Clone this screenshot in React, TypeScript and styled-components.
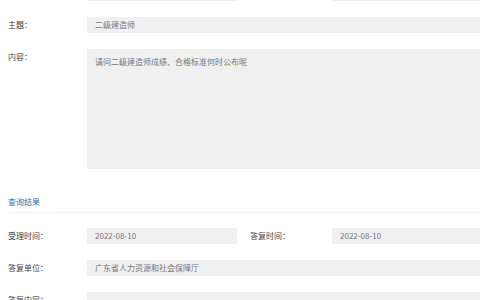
import React from "react";
import styled, { createGlobalStyle } from "styled-components";

const GlobalStyle = createGlobalStyle`
  html, body {
    margin: 0;
    padding: 0;
    background: #fff;
    overflow: hidden;
  }
  body {
    font-family: "Noto Sans CJK SC", "Noto Sans", sans-serif;
  }
`;

// the page is scrolled a little: the row above 主題 only shows its bottom edge
const Page = styled.div`
  width: 600px;
  margin-top: -15px;
  padding-left: 8px;
`;

const Row = styled.div`
  display: flex;
  align-items: flex-start;
  margin-bottom: 16px;
`;

const Label = styled.div<{ $w?: number; $ml?: number }>`
  width: ${(p) => p.$w ?? 79}px;
  margin-left: ${(p) => p.$ml ?? 0}px;
  flex-shrink: 0;
  height: 16px;
  line-height: 16px;
  font-size: 8px;
  color: #444;
`;

const Field = styled.div<{ $w?: number }>`
  ${(p) => (p.$w ? `width: ${p.$w}px; flex-shrink: 0;` : "flex: 1;")}
  box-sizing: border-box;
  height: 16px;
  line-height: 16px;
  padding: 0 8px;
  background: #f0f0f0;
  font-size: 8px;
  color: #777;
  white-space: nowrap;
`;

const TextArea = styled.div<{ $h: number }>`
  flex: 1;
  box-sizing: border-box;
  height: ${(p) => p.$h}px;
  padding: 8px;
  line-height: 10px;
  background: #f0f0f0;
  font-size: 8px;
  color: #777;
`;

const SectionTitle = styled.div`
  margin-top: 27px;
  margin-left: -1px;
  padding: 0 0 4px 1px;
  line-height: 12px;
  font-size: 8px;
  color: #3f6fa8;
  border-bottom: 1px solid #efefef;
  margin-bottom: 15px;
`;

export default function App() {
  return (
    <>
      <GlobalStyle />
      <Page>
        <Row>
          <Label />
          <Field $w={150} />
          <Label $ml={13} $w={82} />
          <Field />
        </Row>
        <Row>
          <Label>主題：</Label>
          <Field>二级建造师</Field>
        </Row>
        <Row>
          <Label>内容：</Label>
          <TextArea $h={120}>请问二级建造师成绩、合格标准何时公布呢</TextArea>
        </Row>

        <SectionTitle>查询结果</SectionTitle>

        <Row>
          <Label>受理时间：</Label>
          <Field $w={150}>2022-08-10</Field>
          <Label $ml={13} $w={82}>
            答复时间：
          </Label>
          <Field>2022-08-10</Field>
        </Row>
        <Row>
          <Label>答复单位：</Label>
          <Field>广东省人力资源和社会保障厅</Field>
        </Row>
        <Row>
          <Label>答复内容：</Label>
          <TextArea $h={120}></TextArea>
        </Row>
      </Page>
    </>
  );
}
